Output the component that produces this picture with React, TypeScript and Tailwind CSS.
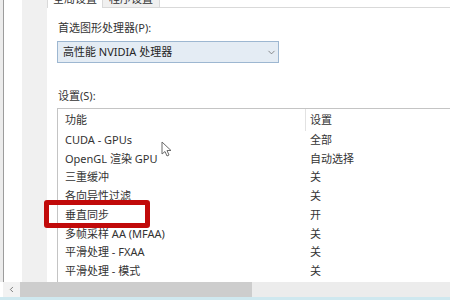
import { ChevronDown, ChevronLeft } from "lucide-react";

const rows: [string, string][] = [
  ["CUDA - GPUs", "全部"],
  ["OpenGL 渲染 GPU", "自动选择"],
  ["三重缓冲", "关"],
  ["各向异性过滤", "关"],
  ["垂直同步", "开"],
  ["多帧采样 AA (MFAA)", "关"],
  ["平滑处理 - FXAA", "关"],
  ["平滑处理 - 模式", "关"],
];

const font = "font-['Noto_Sans','Noto_Sans_CJK_SC',sans-serif]";

const Cursor = () => (
  <svg
    className="absolute left-[161px] top-[141px]"
    width="11"
    height="17"
    viewBox="0 0 11 17"
  >
    <path
      d="M1 1 L1 13 L4 10.5 L6 15 L8 14 L6 9.5 L10 9.5 Z"
      fill="#ffffff"
      stroke="#6a6a6a"
      strokeWidth="1"
      strokeLinejoin="round"
    />
  </svg>
);

export default function App() {
  return (
    <div
      className={`relative w-[450px] h-[300px] overflow-hidden bg-white text-[11px] text-[#333333] ${font}`}
    >
      <div className="flex h-[282px]">
        {/* left window edge */}
        <div className="w-[3px] bg-[#ececec]" />
        <div className="w-px bg-[#9c9c9c]" />
        <div className="w-[18px] bg-white" />
        <div className="w-[25px] bg-[#f0f0f0]" />

        {/* dialog page */}
        <div className="flex-1 flex flex-col bg-white min-w-0">
          {/* tabs, cut off at the top */}
          <div className="flex h-[18px] -mt-[10px] items-stretch">
            <div className="px-[5px] flex items-center bg-white border-t border-x border-[#d9d9d9]">
              全局设置
            </div>
            <div className="px-[6px] flex items-center bg-[#f0f0f0] border-t border-r border-b border-[#d9d9d9]">
              程序设置
            </div>
            <div className="flex-1 border-b border-[#d9d9d9]" />
          </div>

          <div className="pl-[11px] mt-[12px] leading-[16px]">首选图形处理器(P):</div>

          <div className="ml-[10px] mt-[5px] w-[222px] h-[22px] flex items-center justify-between pl-[5px] pr-[1px] bg-[#e4ecf4] border border-[#9db7d1]">
            <span className="text-[#262626]">高性能 NVIDIA 处理器</span>
            <ChevronDown size={11} strokeWidth={1.6} className="text-[#666]" />
          </div>

          <div className="pl-[11px] mt-[25px] leading-[16px]">设置(S):</div>

          {/* list view */}
          <div className="ml-[10px] mt-[4px] flex-1 border-t border-l border-[#c4c4c4] overflow-hidden">
            <div className="flex h-[22px] items-center">
              <div className="w-[247px] pl-[7px]">功能</div>
              <div className="h-full w-px bg-[#e2e2e2]" />
              <div className="pl-[4px]">设置</div>
            </div>
            {rows.map(([name, value]) => (
              <div key={name} className="flex h-[18.7px] items-center">
                <div className="w-[248px] pl-[7px] whitespace-nowrap">{name}</div>
                <div className="pl-[4px]">{value}</div>
              </div>
            ))}
          </div>
        </div>
      </div>

      {/* horizontal scrollbar */}
      <div className="flex h-[15px] ml-[3px] bg-[#ececec]">
        <div className="w-[17px] flex items-center justify-center bg-[#f2f2f2]">
          <ChevronLeft size={9} strokeWidth={2} className="text-[#555]" />
        </div>
        <div className="w-[232px] bg-[#cdcdcd]" />
      </div>
      <div className="h-[3px] bg-[#cfe8ef]" />

      {/* highlight annotation */}
      <div className="absolute left-[44px] top-[200px] w-[106px] h-[28px] border-[5px] border-[#c10a0a] rounded-[3px]" />

      <Cursor />
    </div>
  );
}
